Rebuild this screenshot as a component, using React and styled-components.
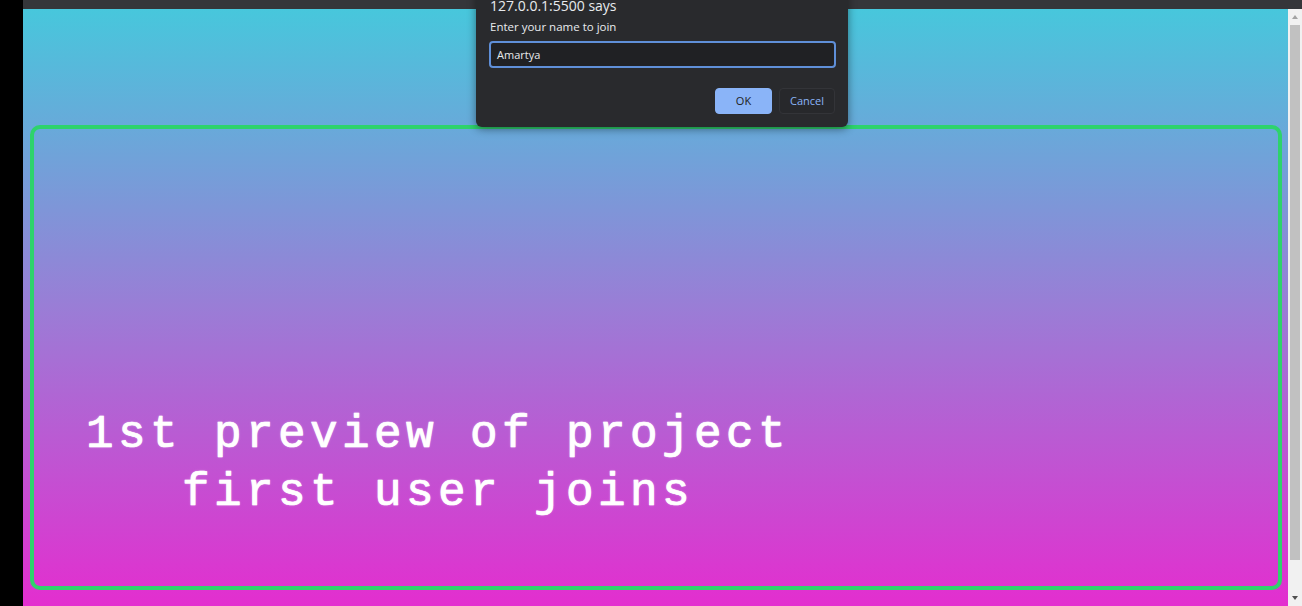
import React from "react";
import styled, { createGlobalStyle } from "styled-components";

const Global = createGlobalStyle`
  html, body { margin: 0; padding: 0; overflow: hidden; }
  body { font-family: "Open Sans", "Noto Sans", sans-serif; }
`;

const Screen = styled.div`
  position: relative;
  width: 1302px;
  height: 606px;
  display: flex;
  flex-direction: column;
  overflow: hidden;
  background: #000;
`;

const TopBar = styled.div`
  height: 9px;
  margin-left: 23px;
  background: #35363a;
  flex: none;
`;

const Body = styled.div`
  flex: 1;
  display: flex;
  min-height: 0;
`;

const LeftStrip = styled.div`
  width: 23px;
  background: #000;
  flex: none;
`;

const Page = styled.main`
  flex: 1;
  background: linear-gradient(to bottom, #47c7dc 0%, #9a7dd6 50%, #e32ecf 100%);
  padding: 116px 6px 16px 7px;
  display: flex;
`;

const Frame = styled.section`
  flex: 1;
  border: 4.5px solid #2ed36c;
  border-radius: 10px;
  display: flex;
  flex-direction: column;
  justify-content: flex-end;
  padding: 0 0 64px 0;
`;

const Caption = styled.h1`
  margin: 0;
  width: 808px;
  text-align: center;
  font-family: "Courier New", "Liberation Mono", monospace;
  font-weight: normal;
  font-size: 46px;
  line-height: 58px;
  letter-spacing: 4.4px;
  color: #fff;
  white-space: pre;
  text-shadow: 0 0 1px rgba(255, 255, 255, 0.9), 0 0 3px rgba(255, 230, 255, 0.35);
  -webkit-text-stroke: 0.6px #fff;
`;

const Scrollbar = styled.div`
  width: 14px;
  flex: none;
  background: #f1f1f1;
  display: flex;
  flex-direction: column;
  align-items: center;
  padding: 2px 0;
  box-sizing: border-box;
`;

const Arrow = styled.div`
  width: 0;
  height: 0;
  border-left: 3.5px solid transparent;
  border-right: 3.5px solid transparent;
  ${(p) => (p.$down ? "border-top: 4px solid #505050;" : "border-bottom: 4px solid #a3a3a3;")}
  margin: 4px 0;
`;

const Track = styled.div`
  flex: 1;
  width: 100%;
  padding: 2px 2px 32px;
  box-sizing: border-box;
  display: flex;
`;

const Thumb = styled.div`
  flex: 1;
  background: #c1c1c1;
`;

const Dialog = styled.div`
  position: absolute;
  left: 476px;
  top: -12px;
  width: 372px;
  box-sizing: border-box;
  background: #292a2d;
  border-radius: 0 0 6px 6px;
  box-shadow: 0 2px 8px rgba(0, 0, 0, 0.45);
  padding: 8px 12px 13px 14px;
  color: #e8eaed;
  font-family: "Open Sans", "Noto Sans", sans-serif;
`;

const Title = styled.div`
  font-size: 14px;
  line-height: 20px;
  color: #e8eaed;
`;

const Message = styled.div`
  font-size: 11.5px;
  line-height: 16px;
  margin-top: 3px;
  color: #e8eaed;
`;

const Input = styled.div`
  margin-top: 6px;
  margin-left: -1px;
  height: 27px;
  box-sizing: border-box;
  border: 2px solid #5f8fd8;
  border-radius: 4px;
  background: #202124;
  padding: 0 6px 1px;
  display: flex;
  align-items: center;
  font-size: 11px;
  color: #e8eaed;
`;

const Buttons = styled.div`
  display: flex;
  justify-content: flex-end;
  gap: 7px;
  margin-top: 20px;
  margin-right: 1px;
`;

const Button = styled.div`
  height: 26px;
  width: ${(p) => p.$w}px;
  box-sizing: border-box;
  border-radius: 4px;
  display: flex;
  align-items: center;
  justify-content: center;
  font-size: 11px;
  padding-bottom: 1px;
  background: ${(p) => (p.$primary ? "#8ab4f8" : "#27282b")};
  color: ${(p) => (p.$primary ? "#202124" : "#8ab4f8")};
  border: 1px solid ${(p) => (p.$primary ? "#8ab4f8" : "#333438")};
`;

export default function App() {
  return (
    <>
      <Global />
      <Screen>
        <TopBar />
        <Body>
          <LeftStrip />
          <Page>
            <Frame>
              <Caption>{"1st preview of project\nfirst user joins"}</Caption>
            </Frame>
          </Page>
          <Scrollbar>
            <Arrow />
            <Track>
              <Thumb />
            </Track>
            <Arrow $down />
          </Scrollbar>
        </Body>
        <Dialog>
          <Title>127.0.0.1:5500 says</Title>
          <Message>Enter your name to join</Message>
          <Input>Amartya</Input>
          <Buttons>
            <Button $primary $w={57}>OK</Button>
            <Button $w={56}>Cancel</Button>
          </Buttons>
        </Dialog>
      </Screen>
    </>
  );
}
